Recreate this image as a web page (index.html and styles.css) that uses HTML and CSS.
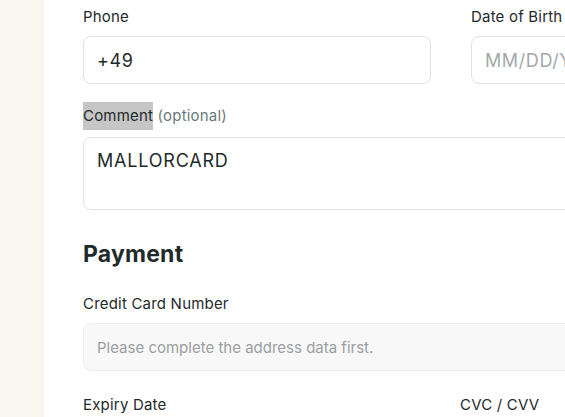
FILE: index.html
```html
<!DOCTYPE html>
<html>
<head>
<meta charset="utf-8">
<link rel="stylesheet" href="styles.css">
</head>
<body>
<aside class="side"></aside>
<main class="main">
  <div class="content">
    <div class="row two">
      <div class="field">
        <label class="label">Phone</label>
        <div class="input">+49</div>
      </div>
      <div class="field">
        <label class="label">Date of Birth</label>
        <div class="input placeholder">MM/DD/YYYY</div>
      </div>
    </div>
    <div class="field comment">
      <label class="label"><span class="sel">Comment</span> <span class="opt">(optional)</span></label>
      <div class="textarea">MALLORCARD</div>
    </div>
    <h2 class="heading">Payment</h2>
    <div class="field">
      <label class="label">Credit Card Number</label>
      <div class="input disabled">Please complete the address data first.</div>
    </div>
    <div class="row pay">
      <div class="field"><label class="label">Expiry Date</label></div>
      <div class="field"><label class="label">CVC / CVV</label></div>
    </div>
  </div>
</main>
</body>
</html>
```
FILE: styles.css
```css
html, body {
  margin: 0;
  padding: 0;
  background: #ffffff;
  overflow: hidden;
}
body {
  display: flex;
  font-family: "Inter", "Noto Sans", sans-serif;
  color: #1f2a2b;
  height: 417px;
}
.side {
  flex: 0 0 44px;
  background: #f8f6ef;
}
.main {
  flex: 0 0 auto;
  padding: 7px 0 0 39px;
}
.content {
  width: 736px;
}
.row {
  display: grid;
  grid-template-columns: 1fr 1fr;
}
.row.two { column-gap: 40px; }
.row.pay { column-gap: 18px; margin-top: 24px; }
.label {
  display: block;
  font-size: 15px;
  letter-spacing: 0.2px;
  line-height: 20px;
  margin-bottom: 9px;
  color: #1f2a2b;
}
.input {
  box-sizing: border-box;
  height: 48px;
  border: 1px solid #dfe3e5;
  border-radius: 8px;
  padding: 0 13px;
  display: flex;
  align-items: center;
  font-size: 18px;
  letter-spacing: 0.6px;
  color: #1f2a2b;
}
.placeholder { color: #a3a9ab; }
.comment { margin-top: 22px; }
.comment .label { margin-bottom: 11px; }
.sel {
  background: #c6c6c6;
  padding: 4px 0 5px;
}
.opt { color: #6a7a7c; }
.textarea {
  box-sizing: border-box;
  height: 73px;
  border: 1px solid #dfe3e5;
  border-radius: 8px;
  padding: 12px 13px;
  font-size: 18px;
  letter-spacing: 0.8px;
  line-height: 22px;
  color: #1f2a2b;
}
.heading {
  margin: 30px 0 26px;
  font-size: 23px;
  letter-spacing: 0.2px;
  line-height: 28px;
  font-weight: 700;
  color: #1f2a2b;
}
.label + .input.disabled { margin-top: 1px; }
.disabled {
  background: #f8f8f8;
  border-color: #eeeeee;
  color: #9a9fa1;
  font-size: 15px;
  letter-spacing: 0;
}
```
